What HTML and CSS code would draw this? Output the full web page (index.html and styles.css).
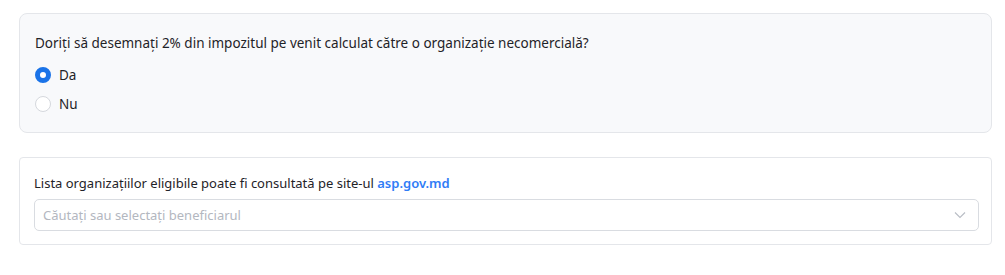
FILE: index.html
```html
<!DOCTYPE html>
<html><head>
<meta charset="utf-8">
<title>Desemnare 2%</title>
<link rel="stylesheet" href="styles.css"></head><body>
<div class="page">
    <div class="card card-question">
        <div class="question">Doriți să desemnați 2% din impozitul pe venit calculat către o organizație necomercială?</div>
        <label class="radio"><span class="dot checked"></span>Da</label>
        <label class="radio"><span class="dot"></span>Nu</label>
    </div>

    <div class="card card-list">
        <div class="hint">Lista organizațiilor eligibile poate fi consultată pe site-ul <a href="#">asp.gov.md</a></div>
        <div class="select">
            <span class="placeholder">Căutați sau selectați beneficiarul</span>
            <svg class="chev" width="12" height="8" viewBox="0 0 12 8"><path d="M1 1.5 L6 6.5 L11 1.5" fill="none" stroke="#b8bcc4" stroke-width="1.1"/></svg>
        </div>
    </div>
</div>
</body></html>
```

FILE: styles.css
```css
body{margin:0;padding:0;background:#fff;font-family:"Noto Sans","Open Sans",sans-serif;font-size:13.5px;color:#1f2328;}
.page{padding:13px 13px 0 19px;display:flex;flex-direction:column;gap:24px;}
.card{border:1px solid #e4e6ea;}
.card-question{background:#f8f9fb;border-radius:8px;padding:19px 15px 14px;}
.card-list{background:#fff;border-radius:4px;padding:15px 12px 13px 14px;font-size:13px;}
.question{line-height:20px;margin-bottom:7px;}
.radio{display:flex;align-items:center;gap:8px;height:29px;}
.dot{width:14px;height:14px;border-radius:50%;border:1px solid #d5d8dd;background:#fff;box-sizing:content-box;}
.dot.checked{width:6px;height:6px;border:5px solid #1a73e8;}
.hint{line-height:20px;margin-bottom:6px;}
.hint a{color:#2f7cf6;text-decoration:none;font-weight:600;}
.select{display:flex;align-items:center;justify-content:space-between;height:30px;border:1px solid #d9dce1;border-radius:5px;padding:0 12px 0 8px;}
.placeholder{color:#b3b7bf;}
.chev{display:block;}
```
